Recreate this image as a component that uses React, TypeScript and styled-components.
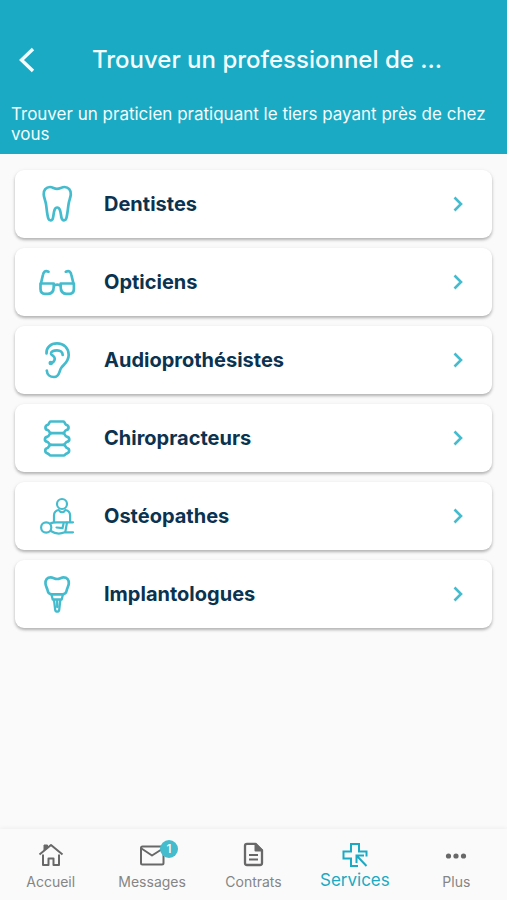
import React from "react";
import styled, { createGlobalStyle } from "styled-components";

const teal = "#1baac3";
const iconTeal = "#45bccd";

const GlobalStyle = createGlobalStyle`
  * { box-sizing: border-box; }
  body {
    margin: 0;
    background: #fafafa;
    font-family: Inter, "Liberation Sans", sans-serif;
  }
`;

const Screen = styled.div`
  display: flex;
  flex-direction: column;
  min-height: 100vh;
`;

const Header = styled.header`
  background: ${teal};
  color: #f4fdff;
  padding: 36px 12px 10px 11px;
`;

const TitleBar = styled.div`
  display: grid;
  grid-template-columns: 32px 1fr 16px;
  align-items: center;
  height: 48px;
`;

const BackButton = styled.button`
  display: flex;
  justify-content: center;
  padding: 0;
  border: 0;
  background: none;
  color: inherit;
  cursor: pointer;
`;

const Title = styled.h1`
  margin: 0;
  padding-left: 12px;
  text-align: center;
  font-size: 24px;
  line-height: 32px;
  font-weight: 500;
  white-space: nowrap;
`;

const Subtitle = styled.p`
  margin: 20px 0 0;
  font-size: 17px;
  line-height: 20px;
`;

const List = styled.ul`
  flex: 1;
  display: flex;
  flex-direction: column;
  gap: 10px;
  margin: 0;
  padding: 16px 15px;
  list-style: none;
`;

const Card = styled.button`
  display: flex;
  align-items: center;
  width: 100%;
  height: 68px;
  padding: 0 24px 0 22px;
  border: 0;
  border-radius: 9px;
  background: #fff;
  box-shadow: 0 2px 3px rgba(0, 0, 0, 0.26), 0 1px 5px rgba(0, 0, 0, 0.06);
  color: ${iconTeal};
  font: inherit;
  text-align: left;
  cursor: pointer;
`;

const CardLabel = styled.span`
  flex: 1;
  margin-left: 27px;
  color: #0b3350;
  font-size: 20px;
  line-height: 24px;
  font-weight: 700;
`;

const TabBar = styled.nav`
  display: grid;
  grid-template-columns: repeat(5, 1fr);
  height: 71px;
  background: #fafafa;
  box-shadow: 0 -1px 4px rgba(0, 0, 0, 0.05);
`;

const Tab = styled.a<{ $active?: boolean }>`
  display: flex;
  flex-direction: column;
  align-items: center;
  gap: ${(p) => (p.$active ? "2px" : "4px")};
  padding-top: 12px;
  color: ${(p) => (p.$active ? teal : "#858585")};
  font-size: ${(p) => (p.$active ? "17px" : "14px")};
  line-height: 22px;
  text-decoration: none;
`;

const TabIcon = styled.span<{ $active?: boolean }>`
  position: relative;
  display: flex;
  color: ${(p) => (p.$active ? teal : "#686868")};
`;

const Badge = styled.span`
  position: absolute;
  top: -1px;
  right: -13px;
  width: 18px;
  height: 18px;
  border-radius: 50%;
  background: ${iconTeal};
  color: #fff;
  font-size: 12px;
  line-height: 18px;
  font-weight: 500;
  text-align: center;
`;

const Art = ({ children }: { children: React.ReactNode }) => (
  <svg width="40" height="40" viewBox="0 0 40 40" fill="none" stroke="currentColor" strokeWidth="2.7" strokeLinecap="round" strokeLinejoin="round" aria-hidden="true">
    {children}
  </svg>
);

const Tooth = () => (
  <Art>
    <path d="M20 4.800c-3 0-4-1.800-7-1.800-4 0-6.600 3-6.300 7.300.2 3.400 1.700 6 2.300 9.700.7 4.600 1 10 2.200 14 .8 3 4 3.100 4.700.2C17 30 16.600 23.500 20.200 23.500S23.500 30 24.600 34.200c.8 2.900 4 2.800 4.800-.2 1.100-4 1.500-9.400 2.200-14 .5-3.700 2-6.300 2.200-9.700C34.100 6 31.500 3 27.500 3c-3 0-4.500 1.800-7.500 1.800Z" />
  </Art>
);

const Glasses = () => (
  <Art>
    <path d="M11.500 9.700c-3.500-1.500-5 .1-5.600 3.300L3.600 23M28.800 9.700c3.500-1.500 5 .1 5.600 3.300L36.800 23M3.500 21.500h13.200v3.500c0 4.200-2 6.800-5.800 6.800H8c-3.200 0-4.500-1.800-4.500-5ZM23.700 21.500h13.200v5.300c0 3.200-1.300 5-4.500 5h-2.900c-3.800 0-5.800-2.600-5.800-6.800ZM16.700 24c1.800-1.800 5.200-1.800 7 0" />
  </Art>
);

const Ear = () => (
  <Art>
    <path d="M9.500 13.500C9 7.500 13.700 3.300 20 3.300c7 0 11.700 5 11.700 11.700 0 6.500-4.500 9.200-7.200 12.500-2.700 3.200-1.500 9.500-7.500 9.500-4 0-7-2.500-7.200-6.500" />
    <path d="M25.700 15c0-3-2.500-4.700-5.700-4.700-3.500 0-6.300 1.300-6 3.500.3 1.500 3.500 2 3.700 4.500.2 2.300-1.300 4-3.700 4.700" />
    <circle cx="13.800" cy="23" r="1" />
  </Art>
);

const Spine = () => (
  <Art>
    <path d="M13.500 3.500h13c1.300 0 1.200 2.600 2.600 3.300 3.200.8 3.200 4.600.3 5.200-1.700.4-1.700 3.200-3.400 3.200H14c-1.700 0-1.700-2.800-3.400-3.200-2.900-.6-2.900-4.400.3-5.200 1.400-.7 1.300-3.300 2.600-3.300Z" />
    <path d="M14 15.200c-1.800 0-1.500 3-3.400 3.400-3.500.7-3.500 4.500-.4 5.200 1.800.4 1.700 3 3.500 3h12.800c1.800 0 1.700-2.600 3.500-3 3.100-.7 3.100-4.500-.4-5.200-1.900-.4-1.600-3.400-3.400-3.400" />
    <path d="M13.700 26.800c-1.800 0-1.700 3-3.700 3.400-2.400.6-2.300 4.600.3 5.100 1.700.3 1.800 2.200 3.500 2.200h12.800c1.700 0 1.800-1.900 3.500-2.200 2.600-.5 2.700-4.500.3-5.100-2-.4-1.900-3.400-3.700-3.400" />
  </Art>
);

const Osteopath = () => (
  <Art>
    <g strokeWidth="2.200">
      <circle cx="25" cy="8" r="5" />
      <circle cx="9.200" cy="31.500" r="5.100" />
      <path d="M17 25.500v-6c0-3.300 2-5 4.700-5.500 1.800 3 5 3 6.700 0 2.800.5 4.700 2.200 4.700 5.500v6M13.500 27.500c2-1.500 5-1.200 8-1.200h14.500M13.800 35c5 3.300 9.700 3 14 1.300h8.200" />
      <path d="M30 26.500l-1.700 9.500M19.500 31.500l6 .7 1-4.500" />
    </g>
  </Art>
);

const Implant = () => (
  <Art>
    <path d="M20.200 5c-2.700 0-4-1.600-6.500-1.600-3.600 0-5.500 2.600-5.200 6.300.2 2.500 1.500 4 2 6.300.4 2.200 1.700 4.300 4.500 4.300h10.300c2.800 0 4.100-2.100 4.500-4.300.4-2.300 1.800-3.800 2-6.300.3-3.700-1.700-6.300-5.300-6.300C24 3.400 22.900 5 20.200 5Z" />
    <path strokeWidth="2.300" d="M14.500 20.500l1.200 5h9l1.200-5M17 25.700l1.200 10.200c.3 2.400 3.700 2.400 4 0l1.200-10.200M20.200 26v7" />
  </Art>
);

const Chevron = () => (
  <svg width="20" height="20" viewBox="0 0 20 20" fill="none" stroke="currentColor" strokeWidth="2.600" aria-hidden="true">
    <path d="M6.500 3.500l6.500 6.500-6.500 6.500" />
  </svg>
);

const TabArt = ({ children }: { children: React.ReactNode }) => (
  <svg width="26" height="26" viewBox="0 0 26 26" fill="none" stroke="currentColor" strokeWidth="2" strokeLinejoin="round" aria-hidden="true">
    {children}
  </svg>
);

const HomeIcon = () => (
  <TabArt>
    <path d="M1.500 13.500L13 4l11.500 9.500" />
    <path d="M5 13.500V24h5.500v-6.500h5V24H21V13.500" />
    <path d="M6 9.500V4h3.500v3L6 9.500Z" fill="currentColor" strokeWidth="1" />
  </TabArt>
);

const MailIcon = () => (
  <TabArt>
    <rect x="2" y="5.500" width="22.500" height="18" rx="1.500" />
    <path d="M2.500 7.500L13 14.500l11-7" />
  </TabArt>
);

const ContractIcon = () => (
  <TabArt>
    <path d="M7 2.800h8.500l6.500 6.500V22c0 1.200-.8 2-2 2H7c-1.200 0-2-.8-2-2V4.800c0-1.200.8-2 2-2Z" strokeWidth="2.300" />
    <path d="M15.500 3v6.500H22Z" fill="currentColor" />
    <path d="M9 14h9M9 18.500h9" />
  </TabArt>
);

const ServicesIcon = () => (
  <TabArt>
    <path strokeLinejoin="miter" d="M16 25H9v-7.500H1.500v-7H9V3h8v7.500h7.500v5" />
    <path strokeLinejoin="miter" d="M14.500 22v-7.500H22M15 15l9.500 10" />
  </TabArt>
);

const MoreIcon = () => (
  <TabArt>
    <g fill="currentColor" stroke="none">
      <circle cx="5.500" cy="15" r="2.600" />
      <circle cx="13" cy="15" r="2.600" />
      <circle cx="20.500" cy="15" r="2.600" />
    </g>
  </TabArt>
);

const specialties = [
  { label: "Dentistes", Icon: Tooth },
  { label: "Opticiens", Icon: Glasses },
  { label: "Audioprothésistes", Icon: Ear },
  { label: "Chiropracteurs", Icon: Spine },
  { label: "Ostéopathes", Icon: Osteopath },
  { label: "Implantologues", Icon: Implant },
];

const tabs = [
  { label: "Accueil", Icon: HomeIcon },
  { label: "Messages", Icon: MailIcon, count: 1 },
  { label: "Contrats", Icon: ContractIcon },
  { label: "Services", Icon: ServicesIcon, active: true },
  { label: "Plus", Icon: MoreIcon },
];

export default function App() {
  return (
    <Screen>
      <GlobalStyle />
      <Header>
        <TitleBar>
          <BackButton aria-label="Retour">
            <svg width="24" height="28" viewBox="0 0 24 28" fill="none" stroke="currentColor" strokeWidth="3.400" aria-hidden="true">
              <path d="M18 3L6.500 14 18 25" />
            </svg>
          </BackButton>
          <Title>Trouver un professionnel de ...</Title>
        </TitleBar>
        <Subtitle>Trouver un praticien pratiquant le tiers payant près de chez vous</Subtitle>
      </Header>
      <List>
        {specialties.map(({ label, Icon }) => (
          <li key={label}>
            <Card>
              <Icon />
              <CardLabel>{label}</CardLabel>
              <Chevron />
            </Card>
          </li>
        ))}
      </List>
      <TabBar>
        {tabs.map(({ label, Icon, count, active }) => (
          <Tab key={label} href="#" $active={active} aria-current={active ? "page" : undefined}>
            <TabIcon $active={active}>
              <Icon />
              {count && <Badge>{count}</Badge>}
            </TabIcon>
            {label}
          </Tab>
        ))}
      </TabBar>
    </Screen>
  );
}
